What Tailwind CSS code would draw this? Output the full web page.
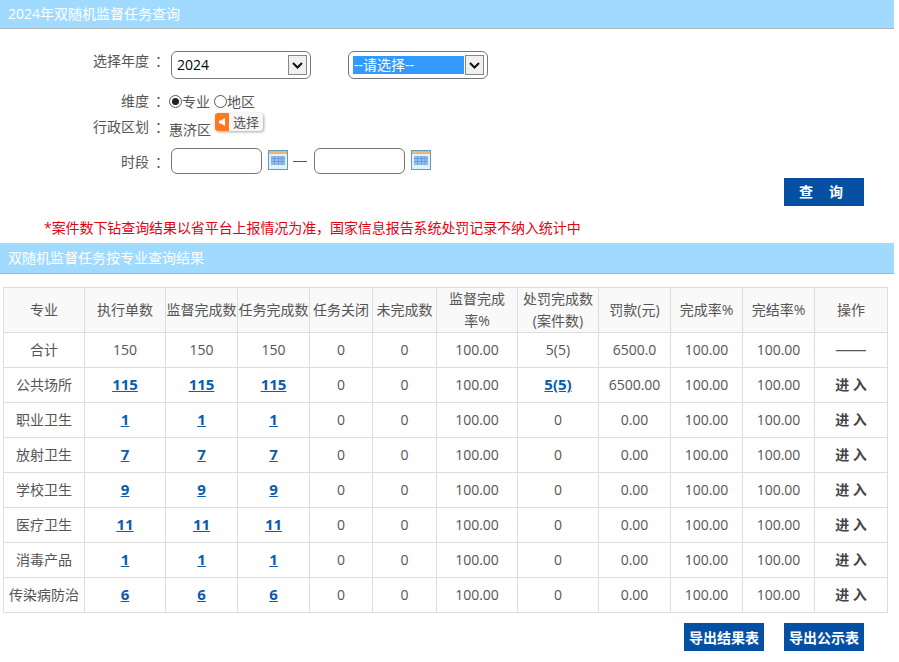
<!DOCTYPE html>
<html lang="zh-CN">
<head>
    <meta charset="UTF-8">
    <title>双随机监督任务查询</title>
    <script src="https://cdn.jsdelivr.net/npm/@tailwindcss/browser@4"></script>
</head>
<body class="bg-white text-[14px] text-[#555] font-['Open_Sans','Noto_Sans_CJK_SC',sans-serif] overflow-hidden">
    <div class="w-[899px] h-[662px]">

        <!-- Header -->
        <div class="w-[894px] h-[29px] bg-[#a1daff] border-b border-[#b0b4b8] pl-2 text-white leading-[28px]">2024年双随机监督任务查询</div>

        <!-- Form -->
        <div class="relative h-[214px]">
            <div class="flex pt-[22px] h-[59px]">
                <div class="w-[169px] text-right leading-[20px]">选择年度<span class="ml-[6px]">：</span></div>
                <div class="ml-[2px] w-[140px] h-[28px] border border-[#777] rounded-[6px] flex items-center pl-[5px] pr-[3px] text-black">
                    <span class="flex-1 -mt-[2px]">2024</span>
                    <span class="w-[19px] h-[20px] bg-[#f0f0f0] border border-[#888] flex items-center justify-center">
                        <svg width="11" height="7" viewBox="0 0 11 7"><path d="M1 1l4.500 4.500L10 1" fill="none" stroke="#111" stroke-width="2"/></svg>
                    </span>
                </div>
                <div class="ml-[37px] w-[140px] h-[28px] border border-[#777] rounded-[6px] flex items-center pl-[4px] pr-[3px]">
                    <span class="w-[111px] h-[18px] bg-[#3399ff] text-white leading-[17px] pl-[1px]">--请选择--</span>
                    <span class="ml-[1px] w-[19px] h-[20px] bg-[#f0f0f0] border border-[#888] flex items-center justify-center">
                        <svg width="11" height="7" viewBox="0 0 11 7"><path d="M1 1l4.500 4.500L10 1" fill="none" stroke="#111" stroke-width="2"/></svg>
                    </span>
                </div>
            </div>
            <div class="flex h-[26px] items-center">
                <div class="w-[169px] text-right -mt-[2px]">维度<span class="ml-[6px]">：</span></div>
                <div class="flex items-center">
                    <span class="w-[13px] h-[13px] rounded-full border border-[#555] flex items-center justify-center"><span class="w-[7px] h-[7px] rounded-full bg-[#222]"></span></span>
                    <span>专业</span>
                    <span class="ml-[4px] w-[13px] h-[13px] rounded-full border border-[#555]"></span>
                    <span>地区</span>
                </div>
            </div>
            <div class="flex h-[26px] items-center">
                <div class="w-[169px] text-right -mt-[2px]">行政区划<span class="ml-[6px]">：</span></div>
                <div class="mt-[5px]">惠济区</div>
                <div class="ml-[4px] -mt-[10px] w-[48px] h-[18px] rounded-[3px] bg-[#f7f7f7] shadow-[1px_1px_3px_rgba(0,0,0,0.35)] flex items-center overflow-hidden">
                    <span class="w-[14px] h-[18px] bg-[#ff7a1f] flex items-center justify-center">
                        <svg width="8" height="10" viewBox="0 0 8 10"><path d="M1 3.500h2L7 1v8L3 6.500H1z" fill="#fff"/></svg>
                    </span>
                    <span class="ml-[4px] text-[13px] leading-[16px]">选择</span>
                </div>
            </div>
            <div class="flex h-[26px] items-center mt-[8px]">
                <div class="w-[169px] text-right">时段<span class="ml-[6px]">：</span></div>
                <div class="ml-[2px] w-[91px] h-[26px] border border-[#777] rounded-[6px]"></div>
                <svg class="ml-[6px] -mt-[3px]" width="20" height="20" viewBox="0 0 20 20"><rect x=".5" y=".5" width="19" height="19" fill="#e4eff8" stroke="#5f9cc4"/><rect x="1" y="1" width="18" height="3" fill="#f5b860"/><rect x="3" y="6" width="14" height="9" fill="#8fbdea"/><path d="M3 8.500h14M3 11.500h14M6.500 6v9M10.500 6v9M14 6v9" stroke="#6a9fdc" stroke-width="1"/></svg>
                <span class="ml-[5px] w-[14px] h-px bg-[#555]"></span>
                <div class="ml-[7px] w-[91px] h-[26px] border border-[#777] rounded-[6px]"></div>
                <svg class="ml-[6px] -mt-[3px]" width="20" height="20" viewBox="0 0 20 20"><rect x=".5" y=".5" width="19" height="19" fill="#e4eff8" stroke="#5f9cc4"/><rect x="1" y="1" width="18" height="3" fill="#f5b860"/><rect x="3" y="6" width="14" height="9" fill="#8fbdea"/><path d="M3 8.500h14M3 11.500h14M6.500 6v9M10.500 6v9M14 6v9" stroke="#6a9fdc" stroke-width="1"/></svg>
            </div>
            <div class="flex justify-end w-[864px] mt-[4px]">
                <button class="w-[80px] h-[28px] bg-[#0650a4] text-white font-bold flex items-center justify-center gap-[16px] pr-[6px] pb-[2px]"><span>查</span><span>询</span></button>
            </div>
            <div class="pl-[44px] mt-[12px] text-[#e60012] leading-[20px] tracking-[-0.08px]">*案件数下钻查询结果以省平台上报情况为准，国家信息报告系统处罚记录不纳入统计中</div>
        </div>

        <!-- Result header -->
        <div class="w-[894px] h-[31px] bg-[#a1daff] border-b border-[#b0b4b8] pl-2 text-white leading-[30px]">双随机监督任务按专业查询结果</div>

        <!-- Table -->
        <table class="table-fixed border-collapse ml-[3px] mt-[13px] w-[884px] text-center [&_td]:border [&_td]:border-[#ddd] [&_td]:p-0 [&_td]:pb-[2px] [&_td]:h-[35px] [&_th]:border [&_th]:border-[#ddd] [&_th]:p-0 [&_th]:h-[45px] [&_th]:font-normal [&_th]:leading-[22px] [&_th]:bg-[#f9f9f9] [&_a]:text-[#0b5cad] [&_a]:font-bold [&_a]:underline [&_a]:text-[15px] [&_b]:font-bold [&_b]:text-[#444]">
            <thead>
                <tr>
                    <th class="w-[81px]">专业</th>
                    <th class="w-[81px]">执行单数</th>
                    <th class="w-[72px]">监督完成数</th>
                    <th class="w-[72px]">任务完成数</th>
                    <th class="w-[63px]">任务关闭</th>
                    <th class="w-[64px]">未完成数</th>
                    <th class="w-[81px]">监督完成<br>率%</th>
                    <th class="w-[81px]">处罚完成数<br>(案件数)</th>
                    <th class="w-[72px]">罚款(元)</th>
                    <th class="w-[72px]">完成率%</th>
                    <th class="w-[72px]">完结率%</th>
                    <th class="w-[73px]">操作</th>
                </tr>
            </thead>
            <tbody>
                <tr><td>合计</td><td>150</td><td>150</td><td>150</td><td>0</td><td>0</td><td>100.00</td><td>5(5)</td><td>6500.0</td><td>100.00</td><td>100.00</td><td><span class="font-['Noto_Sans_CJK_SC'] text-[19px] leading-[20px]">——</span></td></tr>
                <tr><td>公共场所</td><td><a href="#">115</a></td><td><a href="#">115</a></td><td><a href="#">115</a></td><td>0</td><td>0</td><td>100.00</td><td><a href="#">5(5)</a></td><td>6500.00</td><td>100.00</td><td>100.00</td><td><b>进&nbsp;入</b></td></tr>
                <tr><td>职业卫生</td><td><a href="#">1</a></td><td><a href="#">1</a></td><td><a href="#">1</a></td><td>0</td><td>0</td><td>100.00</td><td>0</td><td>0.00</td><td>100.00</td><td>100.00</td><td><b>进&nbsp;入</b></td></tr>
                <tr><td>放射卫生</td><td><a href="#">7</a></td><td><a href="#">7</a></td><td><a href="#">7</a></td><td>0</td><td>0</td><td>100.00</td><td>0</td><td>0.00</td><td>100.00</td><td>100.00</td><td><b>进&nbsp;入</b></td></tr>
                <tr><td>学校卫生</td><td><a href="#">9</a></td><td><a href="#">9</a></td><td><a href="#">9</a></td><td>0</td><td>0</td><td>100.00</td><td>0</td><td>0.00</td><td>100.00</td><td>100.00</td><td><b>进&nbsp;入</b></td></tr>
                <tr><td>医疗卫生</td><td><a href="#">11</a></td><td><a href="#">11</a></td><td><a href="#">11</a></td><td>0</td><td>0</td><td>100.00</td><td>0</td><td>0.00</td><td>100.00</td><td>100.00</td><td><b>进&nbsp;入</b></td></tr>
                <tr><td>消毒产品</td><td><a href="#">1</a></td><td><a href="#">1</a></td><td><a href="#">1</a></td><td>0</td><td>0</td><td>100.00</td><td>0</td><td>0.00</td><td>100.00</td><td>100.00</td><td><b>进&nbsp;入</b></td></tr>
                <tr><td>传染病防治</td><td><a href="#">6</a></td><td><a href="#">6</a></td><td><a href="#">6</a></td><td>0</td><td>0</td><td>100.00</td><td>0</td><td>0.00</td><td>100.00</td><td>100.00</td><td><b>进&nbsp;入</b></td></tr>
            </tbody>
        </table>

        <!-- Export -->
        <div class="flex justify-end gap-[20px] w-[864px] mt-[10px]">
            <button class="w-[80px] h-[28px] bg-[#0650a4] text-white font-bold">导出结果表</button>
            <button class="w-[80px] h-[28px] bg-[#0650a4] text-white font-bold">导出公示表</button>
        </div>
    </div>
</body>
</html>
